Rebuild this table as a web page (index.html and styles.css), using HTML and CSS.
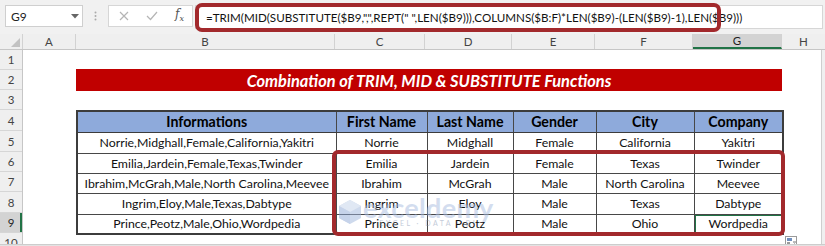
FILE: index.html
```html
<!DOCTYPE html>
<html>
<head>
<meta charset="utf-8">
<link rel="stylesheet" href="styles.css">
</head>
<body>
<div class="app">
  <div class="fbar">
    <div class="namebox"><span>G9</span><svg class="caret" width="8" height="5" viewBox="0 0 8 5"><path d="M0 0H8L4 4.5Z" fill="#666"/></svg></div>
    <div class="sep"><svg width="3" height="10" viewBox="0 0 3 10"><circle cx="1.5" cy="1.5" r="1" fill="#aaa"/><circle cx="1.5" cy="5" r="1" fill="#aaa"/><circle cx="1.5" cy="8.5" r="1" fill="#aaa"/></svg></div>
    <div class="fxbox">
      <svg width="10" height="10" viewBox="0 0 10 10"><path d="M1 1L9 9M9 1L1 9" stroke="#b5b5b5" stroke-width="1.2" fill="none"/></svg>
      <svg width="12" height="10" viewBox="0 0 12 10"><path d="M1 5L4.5 8.5L11 1" stroke="#b5b5b5" stroke-width="1.2" fill="none"/></svg>
      <span class="fx">f<sub>x</sub></span>
    </div>
    <div class="formula"><span>=TRIM(MID(SUBSTITUTE($B9,",",REPT(" ",LEN($B9))),COLUMNS($B:F)*LEN($B9)-(LEN($B9)-1),LEN($B9)))</span></div>
    <div class="hl-formula"></div>
  </div>
  <div class="colhdr">
    <div class="ch corner"><svg width="9" height="9" viewBox="0 0 9 9"><path d="M9 0V9H0Z" fill="#c2c2c2"/></svg></div>
    <div class="ch w-a">A</div>
    <div class="ch w-b">B</div>
    <div class="ch w-c">C</div>
    <div class="ch w-d">D</div>
    <div class="ch w-e">E</div>
    <div class="ch w-f">F</div>
    <div class="ch w-g sel">G</div>
    <div class="ch w-h">H</div>
  </div>
  <div class="sheet">
    <div class="rowhdr">
      <div class="rh h20">1</div>
      <div class="rh h20">2</div>
      <div class="rh h20">3</div>
      <div class="rh h21">4</div>
      <div class="rh h21">5</div>
      <div class="rh h20">6</div>
      <div class="rh h20">7</div>
      <div class="rh h21">8</div>
      <div class="rh h20 sel">9</div>
      <div class="rh h20">10</div>
    </div>
    <div class="cells">
      <div class="title">Combination of TRIM, MID &amp; SUBSTITUTE Functions</div>
      <table class="data">
        <colgroup><col class="c1"><col class="c2"><col class="c3"><col class="c4"><col class="c5"><col class="c6"></colgroup>
        <tr class="head"><th>Informations</th><th>First Name</th><th>Last Name</th><th>Gender</th><th>City</th><th>Company</th></tr>
        <tr class="h21"><td>Norrie,Midghall,Female,California,Yakitri</td><td>Norrie</td><td>Midghall</td><td>Female</td><td>California</td><td>Yakitri</td></tr>
        <tr class="h20"><td>Emilia,Jardein,Female,Texas,Twinder</td><td>Emilia</td><td>Jardein</td><td>Female</td><td>Texas</td><td>Twinder</td></tr>
        <tr class="h20"><td>Ibrahim,McGrah,Male,North Carolina,Meevee</td><td>Ibrahim</td><td>McGrah</td><td>Male</td><td>North Carolina</td><td>Meevee</td></tr>
        <tr class="h21"><td>Ingrim,Eloy,Male,Texas,Dabtype</td><td>Ingrim</td><td>Eloy</td><td>Male</td><td>Texas</td><td>Dabtype</td></tr>
        <tr class="h20"><td>Prince,Peotz,Male,Ohio,Wordpedia</td><td>Prince</td><td>Peotz</td><td>Male</td><td>Ohio</td><td class="active">Wordpedia</td></tr>
      </table>
      <div class="watermark">
        <svg width="24" height="26" viewBox="0 0 24 26"><path d="M12 1L23 7V19L12 25L1 19V7Z" fill="#9fb6dc"/><path d="M12 1L23 7L12 13L1 7Z" fill="#c3d2ea"/><path d="M12 13V25L1 19V7Z" fill="#8ea8d6"/></svg>
        <div class="wm-text"><span class="wm-big">exceldemy</span><span class="wm-small">EXCEL · DATA · BI</span></div>
      </div>
      <div class="hl-range"></div>
      <div class="paste"><svg width="12" height="10" viewBox="0 0 12 10"><rect x="0.5" y="0.5" width="11" height="9" fill="#fff" stroke="#9a9a9a"/><rect x="2" y="2" width="5" height="3" fill="#6f8fbf"/><rect x="2" y="6" width="3" height="2" fill="#9a9a9a"/><path d="M8 6H11M9.5 7.5L11 9" stroke="#777" stroke-width="1"/></svg></div>
    </div>
  </div>
  <div class="bottom"></div>
</div>
</body>
</html>
```
FILE: styles.css
```css
* { box-sizing: border-box; }
body {
  margin: 0;
  width: 825px;
  height: 246px;
  overflow: hidden;
  background: #fff;
  font-family: Lato, "Liberation Sans", sans-serif;
  color: #000;
}
.app { width: 825px; height: 246px; display: flex; flex-direction: column; }

/* formula bar */
.fbar {
  position: relative;
  height: 34px;
  flex: none;
  background: #f1f1f1;
  display: flex;
  align-items: flex-start;
  padding-top: 5px;
}
.namebox {
  margin-left: 5px;
  width: 78px;
  height: 22px;
  background: #fff;
  border: 1px solid #cfcfcf;
  display: flex;
  align-items: center;
  justify-content: space-between;
  padding: 0 3px 0 5px;
  font-size: 12px;
  color: #222;
}
.sep { width: 25px; height: 22px; display: flex; align-items: center; justify-content: center; }
.fxbox {
  width: 85px;
  height: 22px;
  background: #fff;
  border: 1px solid #d6d6d6;
  display: flex;
  align-items: center;
  gap: 17px;
  padding-left: 10px;
}
.fx { font-family: "DejaVu Serif", serif; font-style: italic; font-size: 12px; color: #555; line-height: 1; }
.fx sub { font-size: 8px; }
.formula {
  flex: 1;
  margin-left: 2px;
  margin-right: 2px;
  height: 24px;
  background: #fff;
  border: 1px solid #d6d6d6;
  display: flex;
  align-items: center;
  padding-left: 10px;
  font-size: 11.6px;
  color: #111;
  white-space: pre;
}
.hl-formula {
  position: absolute;
  left: 195px;
  top: 3px;
  width: 526px;
  height: 29px;
  border: 4px solid #a2292c;
  border-radius: 7px;
}

/* column headers */
.colhdr {
  height: 16px;
  flex: none;
  display: flex;
  background: #efefef;
  border-bottom: 1px solid #c6c6c6;
  font-size: 11.5px;
  color: #444;
}
.ch {
  display: flex;
  align-items: center;
  justify-content: center;
  border-right: 1px solid #d2d2d2;
}
.corner { width: 23px; justify-content: flex-end; align-items: flex-end; padding: 0 2px 2px 0; }
.w-a { width: 53px; }
.w-b { width: 259px; }
.w-c { width: 90px; }
.w-d { width: 87px; }
.w-e { width: 83px; }
.w-f { width: 98px; }
.w-g { width: 89px; }
.w-h { flex: 1; border-right: none; }
.ch.sel { background: #d3d3d3; border-bottom: 2px solid #217346; color: #1f1f1f; }

/* sheet */
.sheet {
  flex: 1;
  display: flex;
  overflow: hidden;
  border-right: 3px solid #f0f0f0;
}
.rowhdr {
  width: 23px;
  flex: none;
  background: #efefef;
  border-right: 1px solid #c6c6c6;
  font-size: 11.5px;
  color: #444;
}
.rh {
  display: flex;
  align-items: center;
  justify-content: center;
  border-bottom: 1px solid #d6d6d6;
}
.h20 { height: 20px; }
.h21 { height: 21px; }
.rh.sel { background: #d3d3d3; box-shadow: inset -2px 0 0 #217346; color: #1f1f1f; }

.cells {
  position: relative;
  flex: 1;
  border-right: 1px solid #cfcfcf;
}
.title {
  margin: 19px 0 19px 53px;
  width: 706px;
  height: 22px;
  background: #c00000;
  color: #fff;
  font-weight: 700;
  font-style: italic;
  font-size: 16.4px;
  display: flex;
  align-items: center;
  justify-content: center;
}
.data {
  margin-left: 53px;
  border-collapse: collapse;
  table-layout: fixed;
  width: 706px;
  border: 2px solid #3c3c3c;
}
.c1 { width: 259px; }
.c2 { width: 91px; }
.c3 { width: 86px; }
.c4 { width: 83px; }
.c5 { width: 98px; }
.c6 { width: 89px; }
.data th, .data td {
  border: 1px solid #474747;
  padding: 0;
  text-align: center;
  white-space: nowrap;
  overflow: hidden;
}
.data th {
  background: #8eaadb;
  font-weight: 700;
  font-size: 14.2px;
  height: 21px;
  border-bottom: 1.5px solid #3c3c3c;
}
.data td { font-size: 12.3px; color: #111; }
.data tr.h20 td { height: 20px; }
.data tr.h21 td { height: 21px; }
.data td.active { outline: 1px solid #217346; outline-offset: -2px; }

.hl-range {
  position: absolute;
  left: 309px;
  top: 100px;
  width: 453px;
  height: 86px;
  border: 4px solid #a2292c;
  border-radius: 6px;
}
.watermark {
  position: absolute;
  left: 315px;
  top: 147px;
  display: flex;
  align-items: center;
  gap: 1px;
  opacity: 0.5;
}
.wm-text { display: flex; flex-direction: column; align-items: center; line-height: 1; }
.wm-big { font-size: 27px; font-weight: 700; color: #a9bde0; letter-spacing: 0.3px; line-height: 22px; }
.wm-small { font-size: 7px; letter-spacing: 2.5px; color: #8a99b5; margin-top: 1px; }
.paste {
  position: absolute;
  left: 762px;
  top: 186px;
  width: 12px;
  height: 10px;
  display: flex;
}
.bottom {
  height: 2px;
  flex: none;
  background: #e3e3e3;
  border-top: 1px solid #cdcdcd;
}
```
